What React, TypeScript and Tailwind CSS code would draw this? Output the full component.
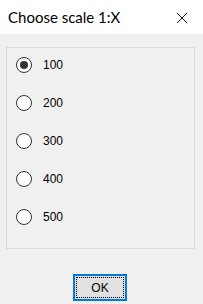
import { useState } from "react";

const scales = [100, 200, 300, 400, 500];

const Radio = ({ checked }: { checked: boolean }) => (
  <span className="flex h-4 w-4 shrink-0 items-center justify-center rounded-full border border-[#333333] bg-white">
    {checked && <span className="h-2 w-2 rounded-full bg-[#333333]" />}
  </span>
);

export default function App() {
  const [scale, setScale] = useState(100);

  return (
    <div className="flex h-[304px] w-[203px] flex-col bg-[#f0f0f0] font-['Liberation_Sans',Arial,sans-serif] text-black">
      <div className="flex h-[34px] shrink-0 items-center justify-between bg-white pl-2 pr-[15px]">
        <span className="font-['Lato',sans-serif] text-[15px] leading-none">
          Choose scale 1:X
        </span>
        <svg width="12" height="12" viewBox="0 0 12 12" className="mt-[1px]">
          <path d="M1 1 L11 11 M11 1 L1 11" stroke="#111" strokeWidth="1" fill="none" />
        </svg>
      </div>

      <div className="px-[6px] pt-[13px]">
        <div className="flex h-[202px] w-[189px] flex-col gap-[22px] border border-[#dcdcdc] pl-[9px] pt-[9px]">
          {scales.map((s) => (
            <label
              key={s}
              className="flex h-4 cursor-default items-center gap-[11px]"
              onClick={() => setScale(s)}
            >
              <Radio checked={scale === s} />
              <span className="text-[12px] leading-none">{s}</span>
            </label>
          ))}
        </div>
      </div>

      <div className="ml-[73px] mt-[25px]">
        <button className="flex h-[27px] w-[54px] items-center justify-center border-2 border-[#0078d7] bg-[#e1e1e1] p-px">
          <span className="flex h-full w-full items-center justify-center border border-dotted border-black text-[12px] leading-none">
            OK
          </span>
        </button>
      </div>
    </div>
  );
}
